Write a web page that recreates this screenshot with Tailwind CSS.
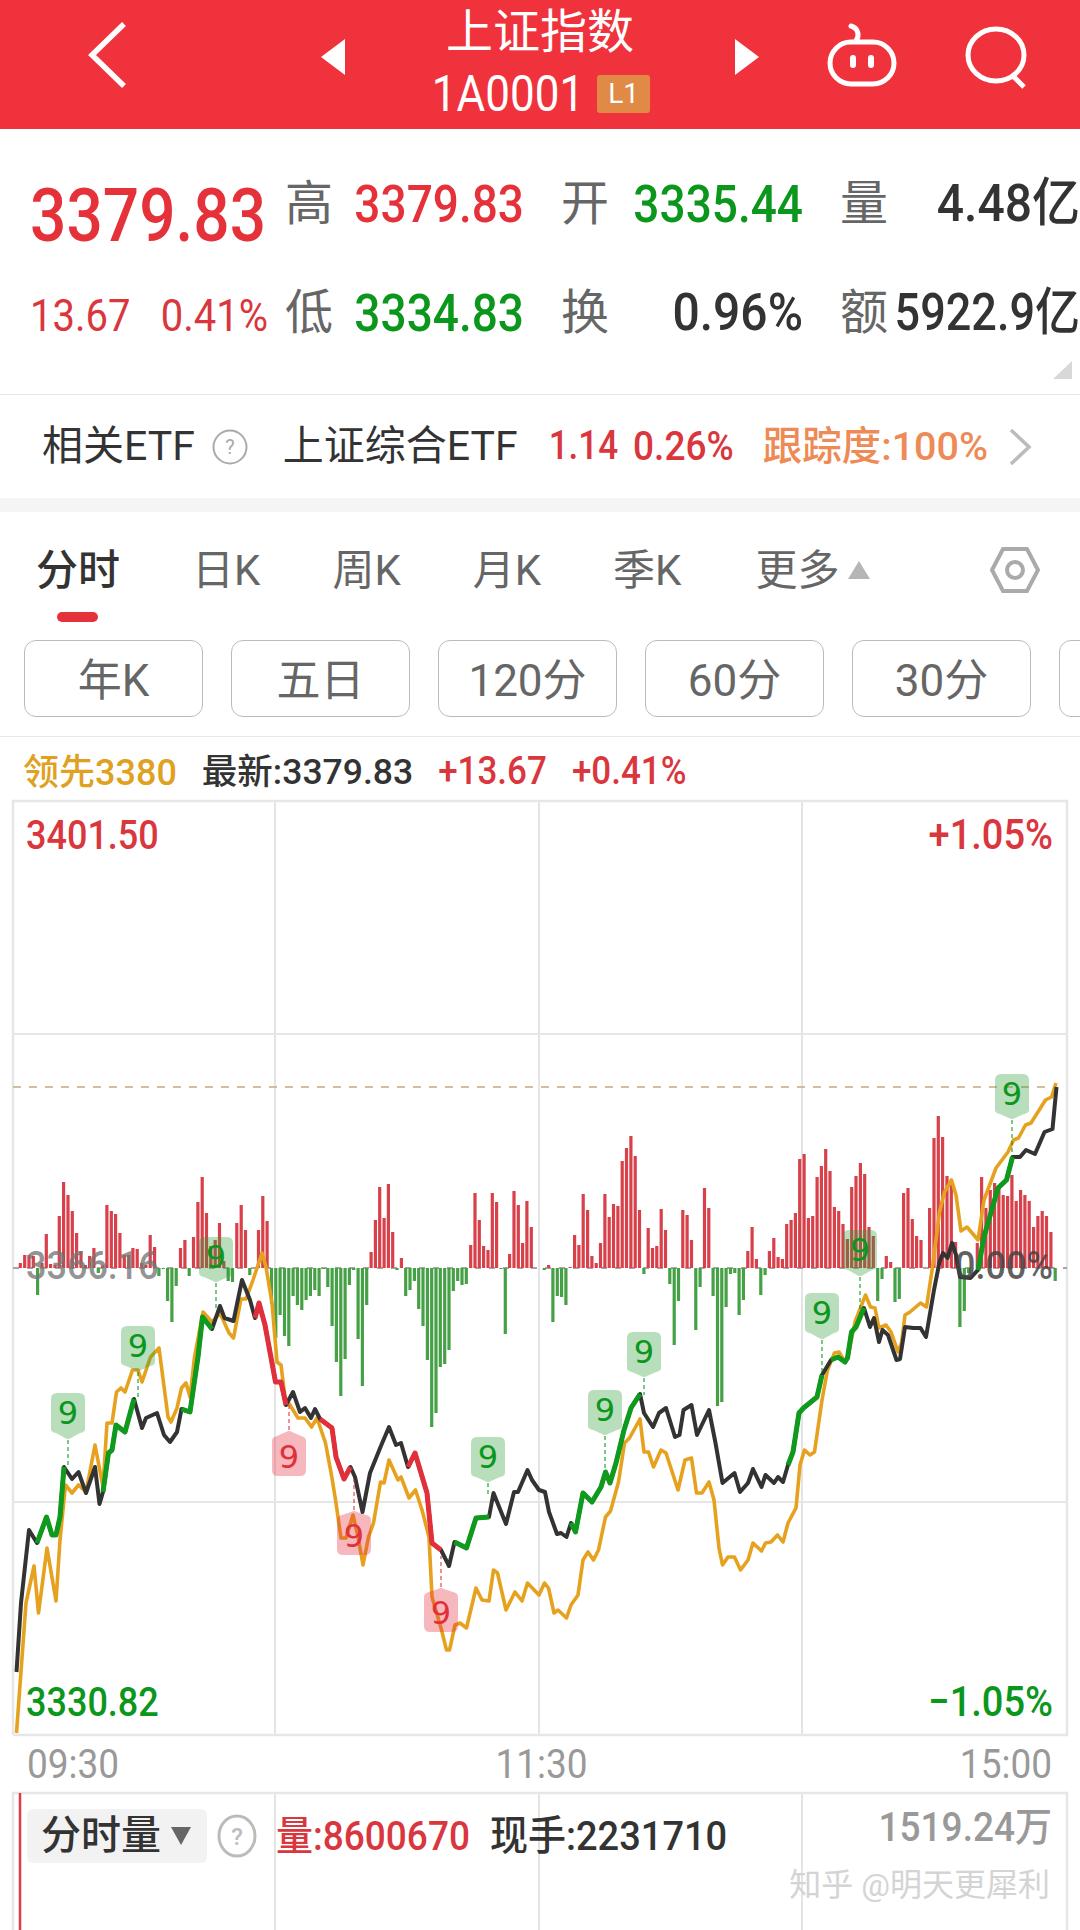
<!DOCTYPE html>
<html lang="zh">
<head>
    <meta charset="UTF-8">
    <title>上证指数</title>
    <script src="https://cdn.jsdelivr.net/npm/@tailwindcss/browser@4"></script>
</head>
<body class="bg-white w-[1080px] h-[1930px] overflow-hidden font-[Roboto,'Noto_Sans_CJK_SC',sans-serif]">
    <!-- header -->
    <header class="h-[129px] bg-[#f0323c] flex items-start text-white">
        <svg class="ml-[86px] mt-[20px] w-[44px] h-[70px] shrink-0" viewBox="0 0 44 70" fill="none" stroke="white" stroke-width="5.5"><path d="M38 4 L6 35 L38 66"/></svg>
        <svg class="ml-[191px] mt-[39px] w-[24px] h-[36px] shrink-0" viewBox="0 0 24 36" fill="white"><path d="M24 0 V36 L0 18 Z"/></svg>
        <div class="w-[390px] h-full flex flex-col items-center shrink-0">
            <div class="mt-[2px] h-[60px] leading-[60px] text-[47px]">上证指数</div>
            <div class="mt-[8px] h-[48px] flex items-center">
                <span class="text-[44px] leading-[48px] scale-y-[1.12] translate-x-[2px]">1A0001</span>
                <span class="ml-[15px] w-[53px] h-[38px] bg-[#e08a45] rounded-[3px] text-[28px] leading-[38px] text-center">L1</span>
            </div>
        </div>
        <svg class="mt-[39px] w-[24px] h-[36px] shrink-0" viewBox="0 0 24 36" fill="white"><path d="M0 0 V36 L24 18 Z"/></svg>
        <svg class="ml-[67px] mt-[22px] w-[72px] h-[66px] shrink-0" viewBox="0 0 72 66" fill="none" stroke="white" stroke-width="5">
            <rect x="4" y="20" width="64" height="42" rx="21"/>
            <path d="M30 19 C34 13 32 6 25 4" stroke-linecap="round"/>
            <rect x="24" y="33" width="6" height="13" rx="3" fill="white" stroke="none"/>
            <rect x="42" y="33" width="6" height="13" rx="3" fill="white" stroke="none"/>
        </svg>
        <svg class="ml-[66px] mt-[25px] w-[66px] h-[64px] shrink-0" viewBox="0 0 66 64" fill="none" stroke="white" stroke-width="5"><ellipse cx="32" cy="30" rx="28" ry="26"/><path d="M48 50 L60 62"/></svg>
    </header>

    <!-- quote -->
    <section class="h-[266px] border-b border-[#e8e8e8] relative flex">
        <div class="w-[288px] shrink-0 pl-[30px]">
            <div class="mt-[56px] h-[64px] leading-[64px] text-[64px] font-medium text-[#e5323a] scale-y-[1.15] origin-left">3379.83</div>
            <div class="mt-[42px] w-[238px] flex justify-between text-[40px] leading-[50px] text-[#d9363e] scale-y-[1.12]"><span>13.67</span><span>0.41%</span></div>
        </div>
        <div class="w-[792px] text-[#333] font-medium whitespace-nowrap">
            <div class="mt-[50px] grid grid-cols-[236px_239px_237px] gap-x-[40px] gap-y-[59px] text-[46px] leading-[50px]">
                <div class="flex justify-between"><span class="-ml-[3px] text-[#666] font-normal text-[48px]">高</span><span class="text-[#e5323a] scale-y-[1.12]">3379.83</span></div>
                <div class="flex justify-between"><span class="-ml-[3px] text-[#666] font-normal text-[48px]">开</span><span class="text-[#0b961c] scale-y-[1.12]">3335.44</span></div>
                <div class="flex justify-between"><span class="-ml-[3px] text-[#666] font-normal text-[48px]">量</span><span class="text-[48px] scale-y-[1.08]">4.48亿</span></div>
                <div class="flex justify-between"><span class="-ml-[3px] text-[#666] font-normal text-[48px]">低</span><span class="text-[#0b961c] scale-y-[1.12]">3334.83</span></div>
                <div class="flex justify-between"><span class="-ml-[3px] text-[#666] font-normal text-[48px]">换</span><span class="text-[48px] scale-y-[1.08]">0.96%</span></div>
                <div class="flex justify-between"><span class="-ml-[3px] text-[#666] font-normal text-[48px]">额</span><span class="text-[45px] scale-y-[1.14]">5922.9亿</span></div>
            </div>
        </div>
        <svg class="absolute left-[1053px] top-[232px] w-[19px] h-[18px]" viewBox="0 0 19 18" fill="#d8d8d8"><path d="M19 0 V18 H0 Z"/></svg>
    </section>

    <!-- related etf -->
    <section class="h-[103px] flex items-center">
        <span class="ml-[42px] text-[41px] text-[#333]">相关ETF</span>
        <svg class="ml-[17px] w-[36px] h-[36px] shrink-0" viewBox="0 0 36 36" fill="none"><circle cx="18" cy="18" r="16.5" stroke="#aaa" stroke-width="2"/><text x="18" y="25" text-anchor="middle" font-size="20" fill="#aaa" font-family="Roboto">?</text></svg>
        <span class="ml-[35px] text-[41px] text-[#333]">上证综合ETF</span>
        <span class="ml-[31px] text-[35px] font-medium text-[#d9363e] scale-y-[1.15]">1.14</span>
        <span class="ml-[15px] text-[37px] font-medium text-[#d9363e] scale-y-[1.1]">0.26%</span>
        <span class="ml-[29px] text-[39.5px] font-medium text-[#ee8a55]">跟踪度:100%</span>
        <svg class="ml-[20px] w-[24px] h-[36px] shrink-0" viewBox="0 0 24 36" fill="none" stroke="#bbb" stroke-width="3.5"><path d="M3 1 L21 18 L3 35"/></svg>
    </section>
    <div class="h-[14px] bg-[#f5f5f5]"></div>

    <!-- tabs -->
    <nav class="h-[128px] relative">
        <div class="h-[116px] flex items-center text-[42px] text-[#666]">
            <span class="ml-[36px] text-[#333] font-medium">分时</span>
            <span class="ml-[72px]">日K</span>
            <span class="ml-[72px]">周K</span>
            <span class="ml-[72px]">月K</span>
            <span class="ml-[72px]">季K</span>
            <span class="ml-[74px]">更多</span>
            <svg class="ml-[9px] w-[22px] h-[18px] shrink-0" viewBox="0 0 22 18" fill="#b5b5b5"><path d="M11 0 L22 18 H0 Z"/></svg>
            <svg class="ml-[120px] w-[50px] h-[46px] shrink-0" viewBox="0 0 50 46" fill="none" stroke="#aaa" stroke-width="4"><path d="M13 2 H37 L48 23 L37 44 H13 L2 23 Z"/><circle cx="25" cy="23" r="8"/></svg>
        </div>
        <div class="absolute left-[57px] top-[100px] w-[41px] h-[10px] rounded-full bg-[#e5323a]"></div>
    </nav>

    <!-- periods -->
    <div class="h-[97px] border-b border-[#e8e8e8] flex gap-[28px] pl-[24px] items-start overflow-hidden text-[44px] text-[#666]">
        <div class="w-[179px] h-[77px] pt-[4px] shrink-0 rounded-[12px] border border-[#bbb] flex items-center justify-center">年K</div>
        <div class="w-[179px] h-[77px] pt-[4px] shrink-0 rounded-[12px] border border-[#bbb] flex items-center justify-center">五日</div>
        <div class="w-[179px] h-[77px] pt-[4px] shrink-0 rounded-[12px] border border-[#bbb] flex items-center justify-center">120分</div>
        <div class="w-[179px] h-[77px] pt-[4px] shrink-0 rounded-[12px] border border-[#bbb] flex items-center justify-center">60分</div>
        <div class="w-[179px] h-[77px] pt-[4px] shrink-0 rounded-[12px] border border-[#bbb] flex items-center justify-center">30分</div>
        <div class="w-[179px] h-[77px] shrink-0 rounded-[12px] border border-[#bbb]"></div>
    </div>

    <!-- latest -->
    <div class="h-[59px] pt-[12px] pl-[23px] flex items-center text-[36px] font-medium gap-[25px]">
        <span class="text-[#e0a020]">领先3380</span>
        <span class="text-[#333] text-[35.5px]">最新:3379.83</span>
        <span class="text-[#d9363e] text-[35px] scale-y-[1.12]">+13.67</span>
        <span class="text-[#d9363e] text-[35px] scale-y-[1.12]">+0.41%</span>
    </div>

    <!-- chart -->
    <div class="relative h-[1134px]">
        <svg id="chart" class="absolute inset-0 w-[1080px] h-[1134px]" viewBox="0 796 1080 1134"></svg>
        <div class="absolute left-[26px] top-[19px] text-[36px] leading-[40px] font-medium text-[#d9363e] scale-y-[1.15]">3401.50</div>
        <div class="absolute right-[27px] top-[19px] text-[38px] leading-[40px] font-medium text-[#d9363e] scale-y-[1.1]">+1.05%</div>
        <div class="absolute left-[26px] top-[450px] text-[36px] leading-[40px] font-medium text-[#777]/80 scale-y-[1.1]">3366.16</div>
        <div class="absolute right-[27px] top-[450px] text-[36px] leading-[40px] font-medium text-[#444]/85 scale-y-[1.1]">0.00%</div>
        <div class="absolute left-[26px] top-[886px] text-[36px] leading-[40px] font-medium text-[#0b961c] scale-y-[1.15]">3330.82</div>
        <div class="absolute right-[27px] top-[886px] text-[38px] leading-[40px] font-medium text-[#0b961c] scale-y-[1.1]">−1.05%</div>
        <div class="absolute left-[27px] right-[28px] top-[949px] flex justify-between text-[37px] leading-[40px] text-[#999] scale-y-[1.1]">
            <span>09:30</span><span class="ml-[4px]">11:30</span><span>15:00</span>
        </div>
        <div class="absolute left-[27px] top-[1010px] flex items-center font-medium">
            <div class="w-[180px] h-[54px] bg-[#f2f2f2] rounded-[6px] flex items-center pl-[14px] text-[40px] text-[#333]">
                分时量
                <svg class="ml-[10px] w-[20px] h-[18px] shrink-0" viewBox="0 0 20 18" fill="#666"><path d="M0 0 H20 L10 18 Z"/></svg>
            </div>
            <svg class="ml-[10px] w-[40px] h-[44px] shrink-0" viewBox="0 0 40 44" fill="none"><ellipse cx="20" cy="22" rx="18" ry="20" stroke="#bbb" stroke-width="3"/><text x="20" y="31" text-anchor="middle" font-size="24" fill="#bbb" font-family="Roboto">?</text></svg>
            <span class="ml-[19px] mt-[2px] text-[37px] text-[#d9363e] scale-y-[1.08]">量:8600670</span>
            <span class="ml-[20px] mt-[2px] text-[38px] text-[#333] scale-y-[1.08]">现手:2231710</span>
        </div>
        <div class="absolute right-[28px] top-[1012px] text-[37px] leading-[40px] font-medium text-[#999] scale-y-[1.08]">1519.24万</div>
        <div class="absolute right-[30px] top-[1071px] text-[32px] leading-[36px] text-[#d4d4d4]">知乎 @明天更犀利</div>
    </div>

    <script>
        // per-minute volume, up is red and down is green
        const vols = [0,5,13,13,12,-27,5,34,4,3,52,86,73,57,35,17,3,12,20,-5,3,63,57,54,35,13,13,20,19,5,3,33,21,-8,-1,-33,-54,-18,20,28,-8,31,66,91,55,22,28,45,7,-13,-14,45,63,38,-7,0,38,72,47,-36,-70,-47,-68,-78,-28,-37,-42,-32,-28,-22,-28,-1,-19,-58,-94,-128,-91,-17,-2,-71,-118,-37,16,48,81,50,84,36,-2,10,-28,-22,-13,-41,-58,-92,-159,-145,-99,-96,-82,-23,-13,-17,-16,23,75,48,22,18,75,66,-1,-66,14,77,63,25,67,41,
            0,0,-2,3,-54,-28,-29,-37,1,33,23,74,58,12,5,25,74,51,64,62,107,120,132,112,58,-6,40,20,22,59,38,-16,-77,-33,58,53,28,-62,-19,80,60,-28,-138,-134,-39,-6,-5,-47,-32,17,41,9,-27,-7,17,30,11,9,44,48,55,109,114,50,52,91,102,119,97,61,57,44,29,81,92,105,94,41,32,-33,-11,12,6,-34,-31,75,80,49,32,28,0,60,130,152,131,92,88,26,-59,-43,-5,0,25,91,60,78,85,80,73,72,93,67,78,73,67,41,52,57,52,36,-13];

        const price = [[16.5,1672],[21,1603],[29,1530],[37,1543],[46.5,1517],[52,1535],[56,1535],[60,1517],[64,1467],[72,1479],[78.5,1472],[86,1493],[95,1467],[99.5,1504],[103,1492],[108.5,1453],[112,1450],[116,1425],[125,1432],[134,1399],[142,1428],[146,1418],[157,1413],[164,1435],[170,1442],[177,1432],[181.5,1409],[190,1412],[198,1357],[202.5,1317],[212,1329],[220,1306],[224.5,1318],[233.5,1321],[242,1280],[250,1300],[255,1318],[259,1303],[265,1325],[275.5,1382],[281,1382],[286,1405],[293,1392],[300,1412],[305,1408],[311,1418],[315,1409],[320,1419],[332,1428],[336,1457],[344,1479],[350.5,1467],[355,1477],[362.5,1512],[370,1473],[380.5,1447],[389,1427],[396,1445],[401,1443],[408,1467],[415,1453],[427,1493],[432,1543],[441,1550],[449,1566],[454.5,1542],[466.5,1548],[476,1518],[489,1517],[493.5,1493],[506,1524],[514,1492],[518,1492],[527.5,1470],[532,1480],[539,1490],[545,1492],[549,1512],[557,1534],[561,1533],[566.5,1537],[571,1523],[575.5,1532],[583,1493],[592,1502],[601,1487],[605.5,1472],[610,1483],[616,1463],[624,1430],[631,1408],[640,1394],[644,1413],[653,1427],[659,1413],[666,1408],[675,1437],[679.5,1435],[683.5,1410],[691.5,1405],[697,1435],[709,1410],[715.5,1443],[722.5,1483],[734.5,1473],[740,1492],[748,1483],[753,1469],[761.5,1487],[765.5,1475],[774,1483],[778,1477],[783,1482],[788,1465],[793,1452],[799,1413],[803.5,1408],[817,1397],[822,1375],[831,1360],[838,1357],[845,1362],[847.5,1358],[851.5,1332],[856,1327],[864,1308],[870,1327],[874,1318],[879,1342],[882.5,1330],[888,1335],[896.5,1360],[900,1359],[905,1327],[913.5,1328],[920.5,1328],[926,1337],[934,1290],[939.5,1262],[943,1253],[947.5,1258],[952,1243],[956,1255],[960,1277],[970.5,1278],[978,1270],[984,1237],[998,1188],[1006.5,1180],[1012.5,1157],[1020,1157],[1026,1150],[1035,1154],[1044.5,1132],[1052.5,1129],[1056.5,1087]];

        const avg = [[16.5,1733],[26,1603],[34,1566],[38.5,1613],[47,1548],[56,1601],[60,1540],[65.5,1485],[72,1493],[78.5,1485],[86,1492],[95,1445],[103,1487],[107,1423],[112,1423],[116.5,1392],[121,1388],[125,1392],[132.5,1370],[138,1370],[142,1382],[150.5,1357],[159,1348],[168,1417],[171,1422],[177,1408],[181.5,1388],[186,1383],[190,1397],[194.5,1357],[203,1312],[212,1322],[220,1313],[229,1333],[233.5,1338],[241,1299],[246,1299],[253,1280],[262,1253],[266,1267],[272,1303],[277,1362],[281,1365],[285,1397],[298,1418],[305,1418],[311.5,1427],[317,1418],[325.5,1443],[332,1478],[336,1503],[341,1538],[346,1538],[353,1515],[358,1537],[363,1565],[368.5,1537],[373.5,1523],[380.5,1482],[384,1483],[389,1460],[398,1480],[401,1477],[409,1498],[415.5,1490],[422,1510],[429,1537],[432,1597],[441,1628],[446.5,1650],[449.5,1650],[455,1625],[460,1623],[466.5,1628],[476,1588],[482,1600],[489,1601],[493.5,1570],[497.5,1573],[506,1610],[515,1592],[522,1601],[527.5,1583],[539,1595],[544.5,1583],[548.5,1588],[554,1613],[558,1610],[566.5,1618],[571,1605],[578,1595],[583,1560],[588,1552],[593.5,1560],[598.5,1550],[605.5,1517],[610.5,1511],[618.5,1482],[624.5,1443],[629.5,1438],[640,1419],[644,1452],[648.5,1452],[653.5,1467],[661,1450],[666,1453],[678,1490],[685,1460],[691.5,1458],[696.5,1493],[702,1493],[709,1482],[714,1500],[719,1548],[722.5,1565],[728,1557],[734.5,1557],[740.5,1570],[748,1560],[753,1543],[761.5,1551],[765.5,1543],[771,1542],[777.5,1535],[783,1542],[788,1523],[796,1508],[800,1465],[804.5,1450],[810,1455],[814.5,1452],[822,1400],[827.5,1370],[834.5,1353],[839,1352],[845,1362],[848,1357],[855,1322],[865.5,1295],[870.5,1307],[875,1308],[879,1328],[886,1325],[891,1332],[898,1352],[901.5,1343],[905,1315],[910,1312],[920.5,1303],[926.5,1307],[932.5,1267],[939.5,1212],[944.5,1192],[951.5,1180],[956,1195],[961,1231],[967,1227],[978,1240],[984,1200],[996,1168],[1008,1152],[1013.5,1140],[1018.5,1138],[1025.5,1125],[1031,1123],[1045.5,1100],[1051.5,1097],[1056,1083]];

        // stretches of the price line in signal colours: from x, to x, colour
        const stretches = [[37,64,'g'],[103,134,'g'],[181.5,212,'g'],[255,286,'r'],[320,350.5,'r'],[408,441,'r'],[454.5,489,'g'],[571,640,'g'],[788,822,'g'],[831,864,'g'],[978,1012.5,'g']];

        // pins: x, box top, tip y, end of the dashed stem, colour
        const pins = [[68,1393,1440,1465,'g'],[138,1326,1372,1400,'g'],[216,1237,1283,1310,'g'],[289,1437,1430,1405,'r'],[354,1516,1510,1480,'r'],[441,1593,1587,1556,'r'],[488,1437,1483,1495,'g'],[605,1390,1436,1472,'g'],[644,1332,1378,1395,'g'],[822,1293,1340,1375,'g'],[860,1230,1277,1315,'g'],[1012,1074,1120,1157,'g']];

        const RED = '#d8404a', GREEN = '#46a046';
        let s = '';

        // frame and grid
        const frame = '#e6e6e6', grid = '#dcdcdc';
        [275, 539, 802].forEach(x => { s += `<path d="M${x} 801 V1735 M${x} 1793 V1930" stroke="${grid}" stroke-width="1.5"/>`; });
        [1034, 1502].forEach(y => { s += `<path d="M13 ${y} H1067" stroke="${frame}" stroke-width="2"/>`; });
        s += `<path d="M13 1735 V801 H1067 V1735 H13 M13 1930 V1793 H1067 V1930" fill="none" stroke="${frame}" stroke-width="2.5"/>`;
        s += `<path d="M20 1793 V1930" stroke="#e03a44" stroke-width="2.5"/>`;
        s += `<path d="M13 1268 H1067" stroke="#8a8a8a" stroke-width="1.5" stroke-dasharray="6 8"/>`;
        s += `<path d="M13 1087 H1056" stroke="#c9a97f" stroke-width="1.5" stroke-dasharray="8 8"/>`;

        // volume bars
        let up = '', down = '';
        vols.forEach((v, i) => {
            const x = (16 + 4.33 * i).toFixed(1);
            if (v > 0) up += `M${x} 1268 V${1268 - v}`;
            if (v < 0) down += `M${x} 1268 V${1268 - v}`;
        });
        s += `<path d="${up}" stroke="${RED}" stroke-width="3.2"/><path d="${down}" stroke="${GREEN}" stroke-width="3.2"/>`;

        // lines
        const line = (pts, color, width) => `<polyline points="${pts.map(p => p.join(',')).join(' ')}" fill="none" stroke="${color}" stroke-width="${width}" stroke-linejoin="round"/>`;
        s += line(avg, '#e6a21e', 3.6);
        s += line(price, '#333333', 4);
        stretches.forEach(([a, b, c]) => {
            s += line(price.filter(p => p[0] >= a && p[0] <= b), c === 'g' ? '#0f9a1e' : '#e0303c', 5);
        });

        // pins with the 9 count
        pins.forEach(([x, top, tip, stem, c]) => {
            const fill = c === 'g' ? '#2e9e3c' : '#e5303c';
            const ink = c === 'g' ? '#0b961c' : '#e0303c';
            const bh = 39, l = x - 17, r = x + 17, b = top + bh;
            const shape = c === 'g'
                ? `M${l + 6} ${top} H${r - 6} Q${r} ${top} ${r} ${top + 6} V${b - 3} Q${r} ${b} ${r - 5} ${b + 1} L${x + 3} ${tip - 2} Q${x} ${tip} ${x - 3} ${tip - 2} L${l + 5} ${b + 1} Q${l} ${b} ${l} ${b - 3} V${top + 6} Q${l} ${top} ${l + 6} ${top} Z`
                : `M${l} ${top + 4} Q${l} ${top} ${l + 5} ${top - 1} L${x - 3} ${tip + 2} Q${x} ${tip} ${x + 3} ${tip + 2} L${r - 5} ${top - 1} Q${r} ${top} ${r} ${top + 4} V${b - 6} Q${r} ${b} ${r - 6} ${b} H${l + 6} Q${l} ${b} ${l} ${b - 6} Z`;
            s += `<path d="M${x} ${tip} V${stem}" stroke="${ink}" stroke-width="1.5" stroke-dasharray="4 3" opacity=".7"/>`;
            s += `<path d="${shape}" fill="${fill}" opacity=".34"/>`;
            s += `<text x="${x}" y="${top + 31}" text-anchor="middle" font-family="DejaVu Sans" font-size="32" fill="${ink}">9</text>`;
        });

        document.getElementById('chart').innerHTML = s;
    </script>
</body>
</html>
